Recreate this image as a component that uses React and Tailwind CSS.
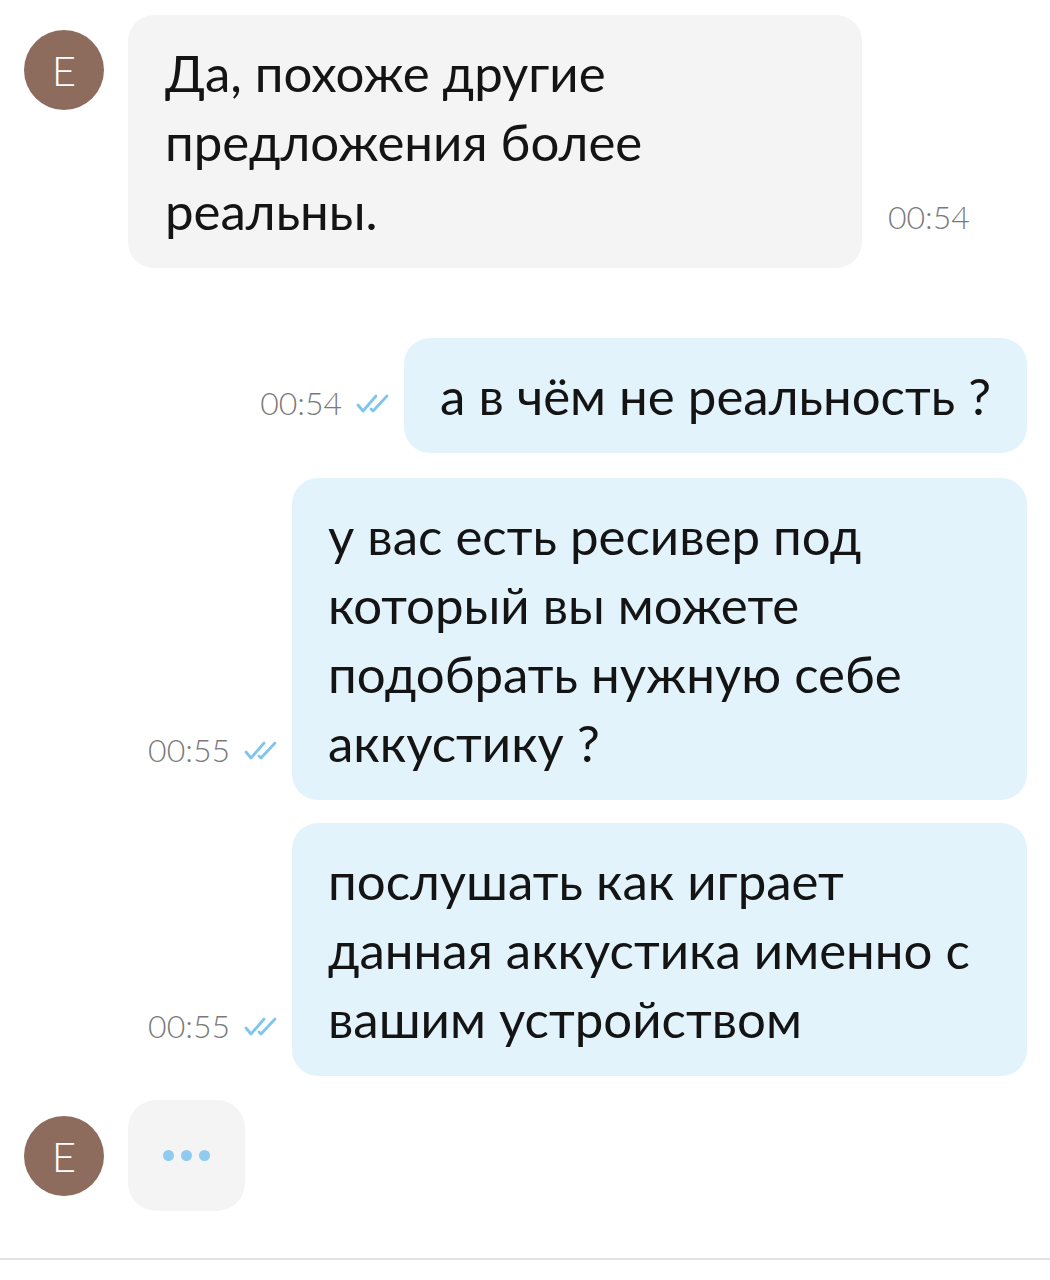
import React from "react";

const msgFont = { fontFamily: "Lato, 'Noto Sans', sans-serif" };

function Checks() {
  return (
    <svg width="38" height="24" viewBox="0 0 38 24" fill="none" className="shrink-0">
      <path d="M4 14 L9 20 L22 5" stroke="#7fc5ee" strokeWidth="2.8" strokeLinecap="round" strokeLinejoin="round" />
      <path d="M17 18 L19 20 L33 5" stroke="#7fc5ee" strokeWidth="2.8" strokeLinecap="round" strokeLinejoin="round" />
    </svg>
  );
}

function Avatar({ className = "" }) {
  return (
    <div className={"w-20 h-20 rounded-full bg-[#8d6b5d] flex items-center justify-center shrink-0 " + className}>
      <span className="text-white text-[42px] font-light leading-none font-['Lato','Noto_Sans',sans-serif]">E</span>
    </div>
  );
}

function Time({ children }) {
  return (
    <span className="text-[32px] text-[#7a7a7a] font-light leading-none font-['Lato','Noto_Sans',sans-serif]">
      {children}
    </span>
  );
}

function Outgoing({ time, children }) {
  return (
    <div className="flex justify-end items-end pr-[23px]">
      <div className="flex items-center gap-[12px] mr-[12px] mb-[34px]">
        <Time>{time}</Time>
        <Checks />
      </div>
      <div
        className="bg-[#e2f3fc] rounded-[26px] max-w-[735px] px-[36px] py-[23px] text-[51px] leading-[69px] text-[#141414]"
        style={msgFont}
      >
        {children}
      </div>
    </div>
  );
}

export default function App() {
  return (
    <div className="w-[1050px] h-[1280px] bg-white relative overflow-hidden">
      <div className="flex flex-col pt-[15px]">
        {/* Incoming */}
        <div className="flex items-start pl-[24px]">
          <Avatar className="mt-[15px]" />
          <div className="flex items-end ml-[24px]">
            <div
              className="bg-[#f4f4f4] rounded-[26px] w-[734px] px-[37px] py-[23px] text-[51px] leading-[69px] text-[#141414]"
              style={msgFont}
            >
              Да, похоже другие предложения более реальны.
            </div>
            <div className="ml-[26px] mb-[33px]">
              <Time>00:54</Time>
            </div>
          </div>
        </div>

        <div className="h-[70px]" />
        <Outgoing time="00:54">а в чём не реальность ?</Outgoing>
        <div className="h-[25px]" />
        <Outgoing time="00:55">у вас есть ресивер под который вы можете подобрать нужную себе аккустику ?</Outgoing>
        <div className="h-[23px]" />
        <Outgoing time="00:55">послушать как играет данная аккустика именно с вашим устройством</Outgoing>
        <div className="h-[24px]" />

        {/* Typing */}
        <div className="flex items-start pl-[24px]">
          <Avatar className="mt-[16px]" />
          <div className="ml-[24px] w-[117px] h-[111px] rounded-[28px] bg-[#f4f4f4] flex items-center justify-center gap-[7px]">
            <span className="w-[11px] h-[11px] rounded-full bg-[#8fcbf0]" />
            <span className="w-[11px] h-[11px] rounded-full bg-[#8fcbf0]" />
            <span className="w-[11px] h-[11px] rounded-full bg-[#8fcbf0]" />
          </div>
        </div>
      </div>
      <div className="absolute left-0 right-0 top-[1258px] h-[2px] bg-[#e3e3e3]" />
    </div>
  );
}
